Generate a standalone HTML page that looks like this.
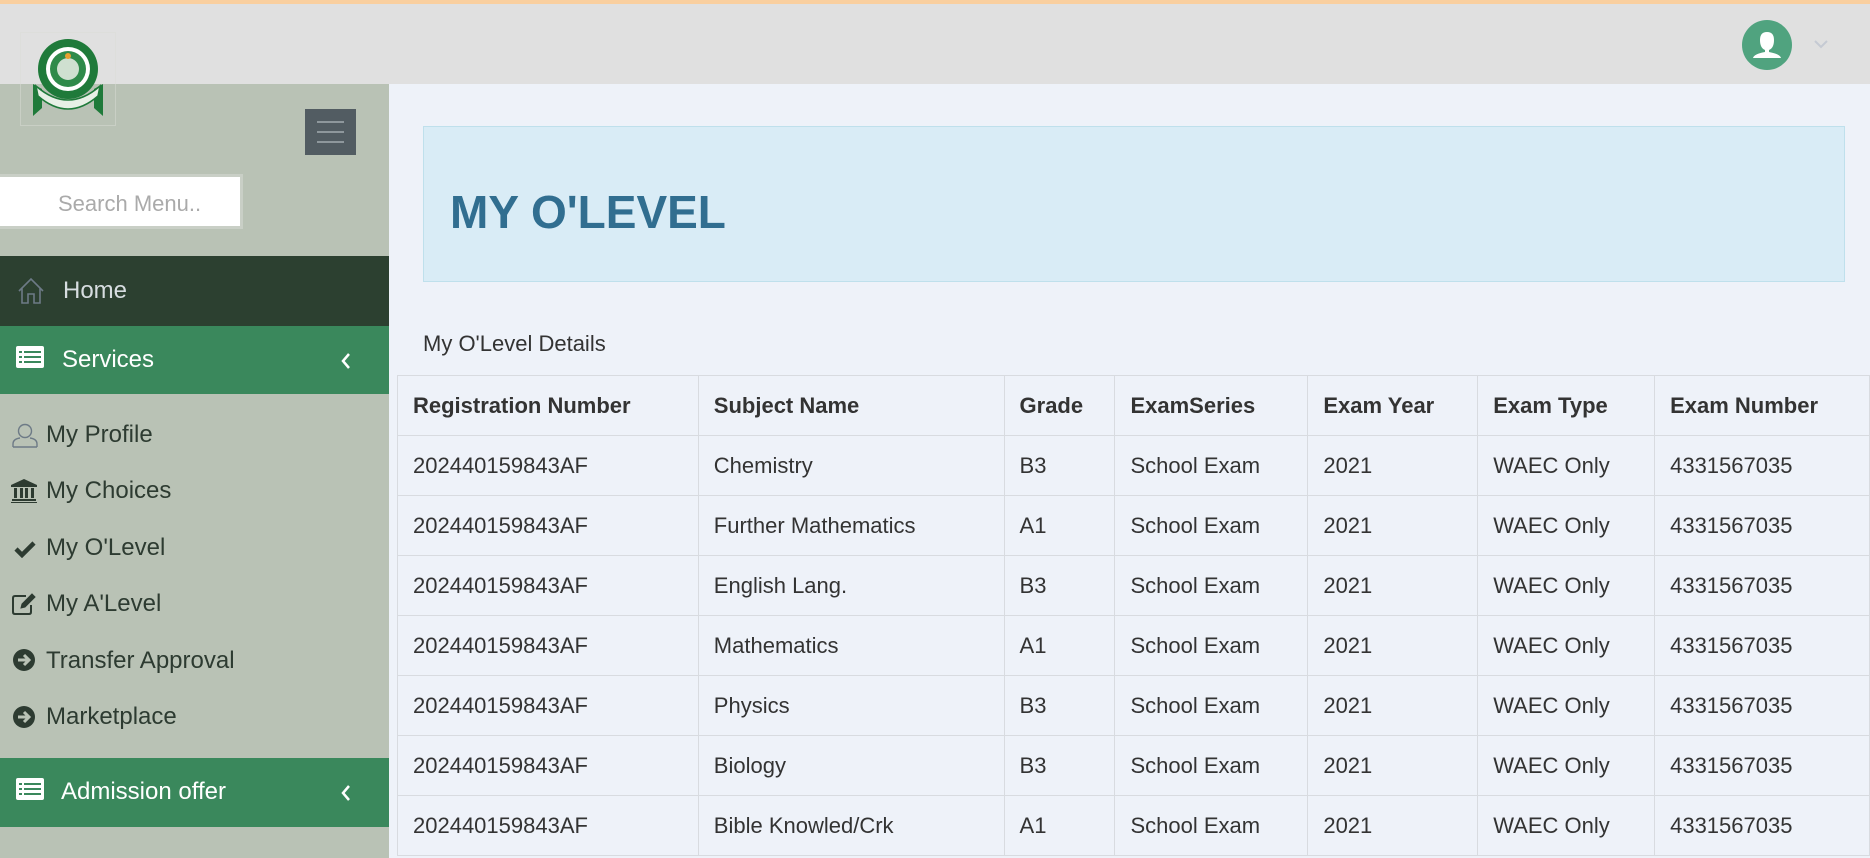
<!DOCTYPE html>
<html><head><style>
*{box-sizing:border-box;margin:0;padding:0}
body{width:1870px;height:858px;overflow:hidden;background:#eef2f9;font-family:"Liberation Sans",sans-serif;position:relative}
.top{position:absolute;left:0;top:0;width:1870px;height:4px;background:#f9cf9f}
.hdr{position:absolute;left:0;top:4px;width:1870px;height:80px;background:#e0e0e0}
.side{position:absolute;left:0;top:84px;width:389px;height:774px;background:#b9c2b5}
.logo{position:absolute;left:20px;top:32px;width:96px;height:94px;border:1px solid #d9dcd6;opacity:.5}
.ham{position:absolute;left:305px;top:109px;width:51px;height:46px;background:#525c62}
.ham i{position:absolute;left:12px;width:27px;height:2px;background:#8e979c}
.search{position:absolute;left:0;top:174px;width:243px;height:55px;background:#fff;border:3px solid #c9cfc6;border-left:none;color:#aaa;font-size:22px;padding:14px 0 0 58px}
.row{position:absolute;left:0;width:389px;color:#fff;font-size:24px}
.item{position:absolute;left:46px;font-size:24px;color:#2d3b31}
.ic{position:absolute;left:12px}
.tbl{position:absolute;left:397px;top:375px;border-collapse:collapse;font-size:22px;color:#333}
.tbl td,.tbl th{border:1px solid #d8dbe0;height:60px;padding:0 15px;text-align:left;white-space:nowrap}
.tbl th{font-weight:bold}
</style></head><body>
<div class="top"></div>
<div class="hdr"></div>
<div class="side"></div>
<div class="logo"></div>
<svg style="position:absolute;left:28px;top:34px" width="80" height="84" viewBox="0 0 80 84">
<path d="M5 50 L5 82 L14 74 L14 55Z" fill="#1f7a3a"/><path d="M75 50 L75 82 L66 74 L66 55Z" fill="#1f7a3a"/>
<path d="M8 52 Q40 80 72 52 L70 62 Q40 88 10 62Z" fill="#e8f0e6" stroke="#1f7a3a" stroke-width="1.5"/>
<circle cx="40" cy="35" r="30" fill="#1f7a3a"/><circle cx="40" cy="35" r="22" fill="#fff"/><circle cx="40" cy="35" r="18" fill="#2f8a4a"/><circle cx="40" cy="35" r="11" fill="#cfe0d0"/><circle cx="40" cy="22" r="3" fill="#e8a030"/>
</svg>
<div class="ham"><i style="top:12px"></i><i style="top:22px"></i><i style="top:32px"></i></div>
<div class="search">Search Menu..</div>
<div class="row" style="top:256px;height:70px;background:#2c4030;color:#d7dde0">
<svg class="ic" style="left:17px;top:21px" width="28" height="28" viewBox="0 0 28 28" fill="none" stroke="#6d7a86" stroke-width="1.6"><path d="M2 14 L14 2 L26 14 M5 11 V26 H11 V17 H17 V26 H23 V11"/></svg>
<span style="position:absolute;left:63px;top:21px">Home</span></div>
<div class="row" style="top:326px;height:68px;background:#3a885c">
<svg class="ic" style="left:16px;top:20px" width="28" height="22" viewBox="0 0 28 22"><rect width="28" height="22" rx="2" fill="#fff"/><g fill="#3a885c"><rect x="3" y="5" width="3" height="2"/><rect x="8" y="5" width="17" height="2"/><rect x="3" y="10" width="3" height="2"/><rect x="8" y="10" width="17" height="2"/><rect x="3" y="15" width="3" height="2"/><rect x="8" y="15" width="17" height="2"/></g></svg>
<span style="position:absolute;left:62px;top:20px">Services</span>
<svg style="position:absolute;left:340px;top:26px" width="12" height="18" viewBox="0 0 12 18"><path d="M9 2 L3 9 L9 16" stroke="#fff" stroke-width="2.5" fill="none"/></svg></div>

<svg style="position:absolute;left:12px;top:423px" width="26" height="25" viewBox="0 0 26 25" fill="none" stroke="#6d7a86" stroke-width="1.4"><circle cx="13" cy="8" r="6.5"/><path d="M1 24 V21 Q1 16 8 15 M25 24 V21 Q25 16 18 15 M1 24 H25"/></svg>
<div class="item" style="top:421px">My Profile</div>
<svg style="position:absolute;left:11px;top:479px" width="26" height="24" viewBox="0 0 26 24" fill="#2d3b31"><path d="M13 0 L26 6 V8 H0 V6Z"/><rect x="3" y="9" width="3" height="10"/><rect x="9" y="9" width="3" height="10"/><rect x="14" y="9" width="3" height="10"/><rect x="20" y="9" width="3" height="10"/><rect x="1" y="20" width="24" height="2"/><rect x="0" y="23" width="26" height="1.5"/></svg>
<div class="item" style="top:477px">My Choices</div>
<svg style="position:absolute;left:14px;top:540px" width="22" height="18" viewBox="0 0 22 18"><path d="M2 9 L8 15 L20 3" stroke="#2d3b31" stroke-width="4.5" fill="none"/></svg>
<div class="item" style="top:534px">My O'Level</div>
<svg style="position:absolute;left:12px;top:593px" width="25" height="22" viewBox="0 0 25 22" fill="none" stroke="#2d3b31" stroke-width="2"><path d="M14 3 H3 Q1 3 1 5 V19 Q1 21 3 21 H17 Q19 21 19 19 V12"/><path d="M9 15 L10 11 L20 1 L23 4 L13 14Z" fill="#2d3b31" stroke-width="1"/></svg>
<div class="item" style="top:590px">My A'Level</div>
<svg style="position:absolute;left:13px;top:649px" width="22" height="22" viewBox="0 0 22 22"><circle cx="11" cy="11" r="11" fill="#2d3b31"/><path d="M5 11 H15 M11 6 L16 11 L11 16" stroke="#b9c2b5" stroke-width="3" fill="none"/></svg>
<div class="item" style="top:647px">Transfer Approval</div>
<svg style="position:absolute;left:13px;top:706px" width="22" height="22" viewBox="0 0 22 22"><circle cx="11" cy="11" r="11" fill="#2d3b31"/><path d="M5 11 H15 M11 6 L16 11 L11 16" stroke="#b9c2b5" stroke-width="3" fill="none"/></svg>
<div class="item" style="top:703px">Marketplace</div>

<div class="row" style="top:758px;height:69px;background:#3a885c">
<svg class="ic" style="left:16px;top:20px" width="28" height="22" viewBox="0 0 28 22"><rect width="28" height="22" rx="2" fill="#fff"/><g fill="#3a885c"><rect x="3" y="5" width="3" height="2"/><rect x="8" y="5" width="17" height="2"/><rect x="3" y="10" width="3" height="2"/><rect x="8" y="10" width="17" height="2"/><rect x="3" y="15" width="3" height="2"/><rect x="8" y="15" width="17" height="2"/></g></svg>
<span style="position:absolute;left:61px;top:20px">Admission offer</span>
<svg style="position:absolute;left:340px;top:26px" width="12" height="18" viewBox="0 0 12 18"><path d="M9 2 L3 9 L9 16" stroke="#fff" stroke-width="2.5" fill="none"/></svg></div>

<svg style="position:absolute;left:1742px;top:20px" width="50" height="50" viewBox="0 0 50 50"><circle cx="25" cy="25" r="25" fill="#50a37f"/><path d="M25 12 Q32 12 32 20 Q32 28 27 30 V32 Q38 34 39 38 H11 Q12 34 23 32 V30 Q18 28 18 20 Q18 12 25 12Z" fill="#fff"/></svg>
<svg style="position:absolute;left:1814px;top:40px" width="14" height="9" viewBox="0 0 14 9"><path d="M1 1 L7 7 L13 1" stroke="#c5cad3" stroke-width="2" fill="none"/></svg>

<div style="position:absolute;left:423px;top:126px;width:1422px;height:156px;background:#d9ecf6;border:1px solid #bfe0ec"></div>
<div style="position:absolute;left:450px;top:185px;font-size:46px;font-weight:bold;color:#316e90">MY O'LEVEL</div>
<div style="position:absolute;left:423px;top:331px;font-size:22px;color:#333">My O'Level Details</div>
<table class="tbl">
<colgroup><col style="width:301px"><col style="width:306px"><col style="width:111px"><col style="width:193px"><col style="width:170px"><col style="width:177px"><col style="width:215px"></colgroup>
<tr><th>Registration Number</th><th>Subject Name</th><th>Grade</th><th>ExamSeries</th><th>Exam Year</th><th>Exam Type</th><th>Exam Number</th></tr>
<tr><td>202440159843AF</td><td>Chemistry</td><td>B3</td><td>School Exam</td><td>2021</td><td>WAEC Only</td><td>4331567035</td></tr>
<tr><td>202440159843AF</td><td>Further Mathematics</td><td>A1</td><td>School Exam</td><td>2021</td><td>WAEC Only</td><td>4331567035</td></tr>
<tr><td>202440159843AF</td><td>English Lang.</td><td>B3</td><td>School Exam</td><td>2021</td><td>WAEC Only</td><td>4331567035</td></tr>
<tr><td>202440159843AF</td><td>Mathematics</td><td>A1</td><td>School Exam</td><td>2021</td><td>WAEC Only</td><td>4331567035</td></tr>
<tr><td>202440159843AF</td><td>Physics</td><td>B3</td><td>School Exam</td><td>2021</td><td>WAEC Only</td><td>4331567035</td></tr>
<tr><td>202440159843AF</td><td>Biology</td><td>B3</td><td>School Exam</td><td>2021</td><td>WAEC Only</td><td>4331567035</td></tr>
<tr><td>202440159843AF</td><td>Bible Knowled/Crk</td><td>A1</td><td>School Exam</td><td>2021</td><td>WAEC Only</td><td>4331567035</td></tr>
</table>
</body></html>
